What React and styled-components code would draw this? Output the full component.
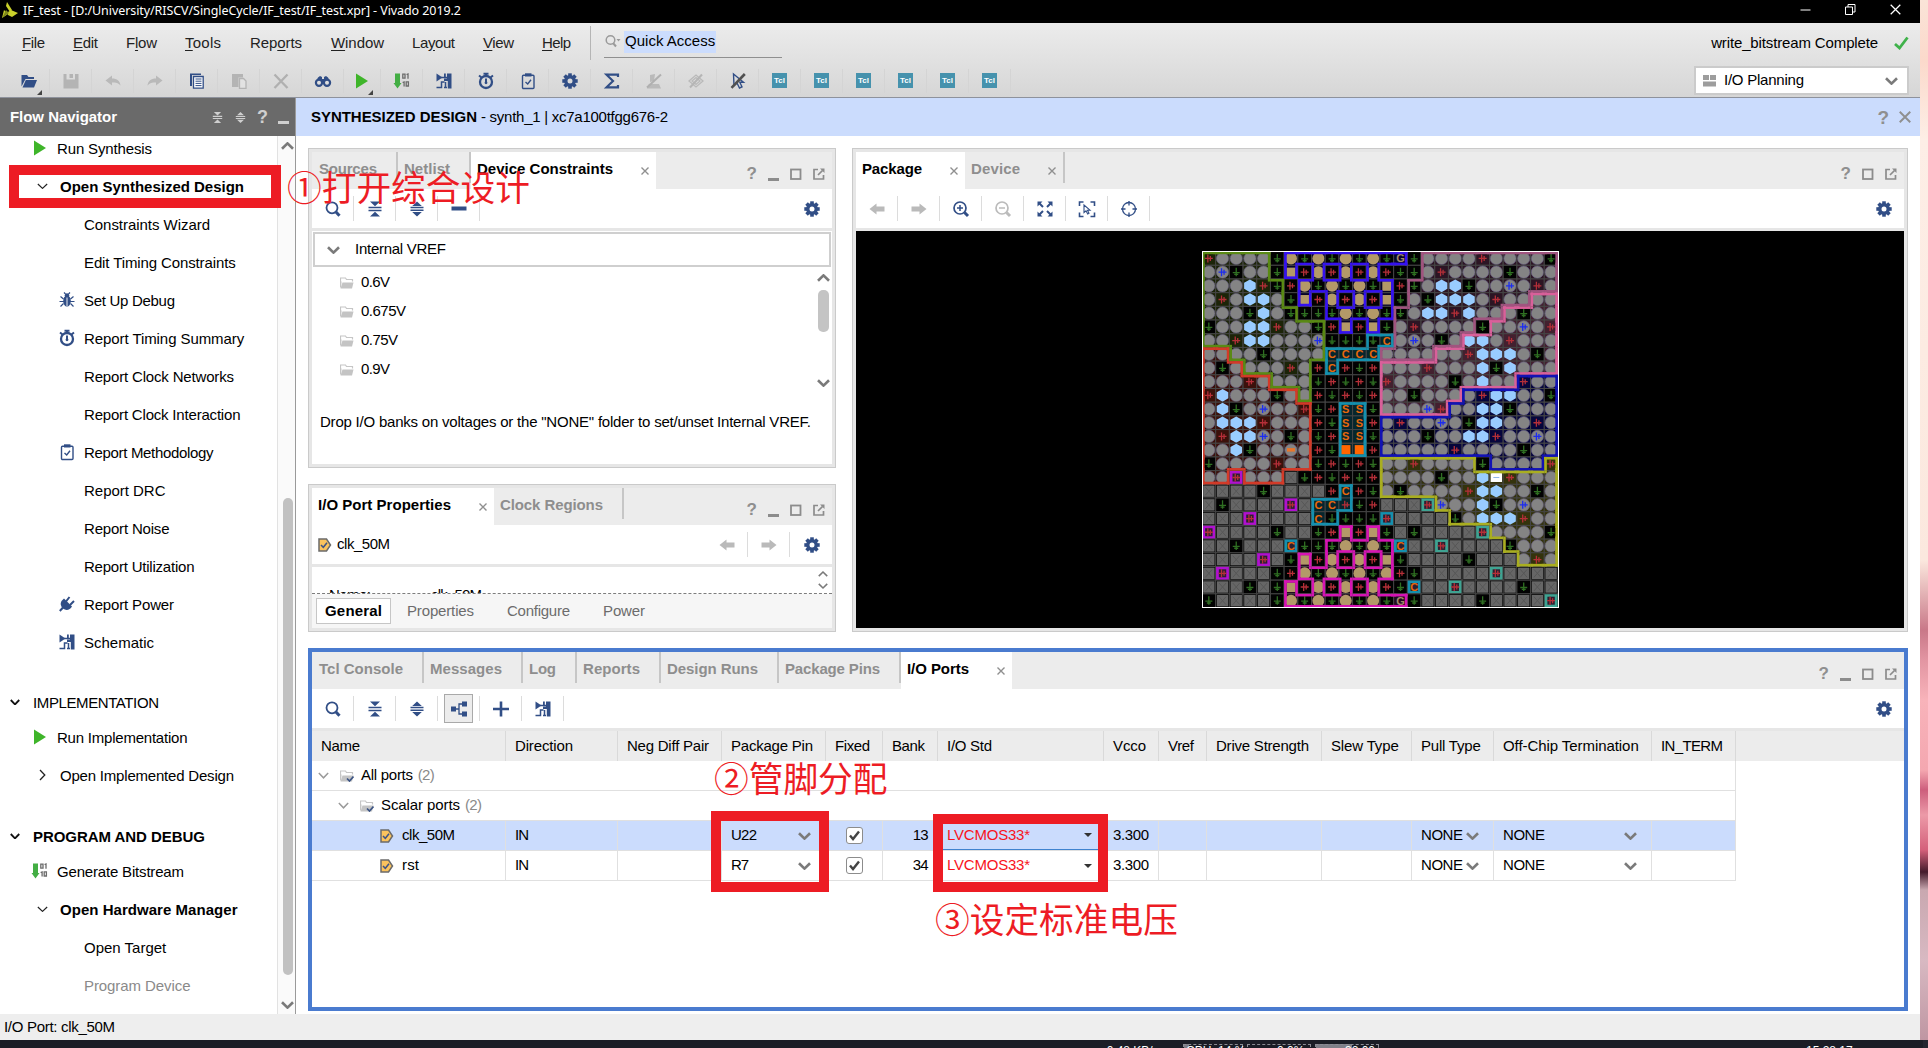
import React from 'react';
import styled, { createGlobalStyle, css } from 'styled-components';

const NAVY = '#314e86';
const GREY = '#8c8c8c';
const RED = '#ed1c24';
const FONT = '"Liberation Sans", Arial, "Noto Sans CJK SC", sans-serif';

const GlobalStyle = createGlobalStyle`
  * { box-sizing: border-box; }
  html, body { margin: 0; padding: 0; }
  body { width: 1928px; height: 1048px; overflow: hidden; background: #fff; font-family: ${FONT}; font-size: 15px; color: #000; }
  svg { display: block; flex: none; }
`;

/* ---------- text with a fixed measure ---------- */
let ctx;
const tracking = (text, width, size, bold, family) => {
  if (!width) return 0;
  ctx = ctx || document.createElement('canvas').getContext('2d');
  ctx.font = `${bold ? 'bold ' : ''}${size}px ${family}`;
  return (width - ctx.measureText(text).width) / Math.max(1, text.length - 1);
};

const Label = styled.span`
  display: block;
  white-space: pre;
  flex: none;
  padding-bottom: 2px;
  font-family: ${(p) => p.$family};
  font-size: ${(p) => p.$size}px;
  font-weight: ${(p) => (p.$bold ? 'bold' : 'normal')};
  color: ${(p) => p.$color};
  letter-spacing: ${(p) => p.$ls}px;
`;
const U = styled.u`text-underline-offset: 2px;`;

function T({ children, w, size = 15, bold = false, color = 'inherit', family = FONT, mark }) {
  const ls = tracking(children, w, size, bold, family);
  const i = mark ? children.indexOf(mark) : -1;
  return (
    <Label $family={family} $size={size} $bold={bold} $color={color} $ls={ls}>
      {i < 0 ? children : <>{children.slice(0, i)}<U>{mark}</U>{children.slice(i + 1)}</>}
    </Label>
  );
}

/* ---------- icons ---------- */
const Svg = ({ s = 18, vb = 18, children }) => (
  <svg width={s} height={s} viewBox={`0 0 ${vb} ${vb}`} fill="none">{children}</svg>
);
const gearTeeth = [0, 45, 90, 135, 180, 225, 270, 315];
const Icons = {
  open: () => <Svg><path d="M1.5 14.5V3H7L8.5 5H14V7H5.500L1.500 14.500Z" fill={NAVY} /><path d="M5.800 8H17L14 15.500H2.500Z" fill={NAVY} /></Svg>,
  save: () => <Svg><path d="M1.500 2H4.500V7.500H13V2H16.500V16.500H1.500Z M7.500 2H11V6H7.500Z" fill="#b4b4b4" /></Svg>,
  undo: () => <Svg><path d="M1.500 8.500L8 3.500V6.500C13 6.500 16 9 16.500 13.500C14.500 11 12 10.500 8 10.500V13.500Z" fill="#b9b9b9" /></Svg>,
  redo: () => <Svg><path d="M16.500 8.500L10 3.500V6.500C5 6.500 2 9 1.500 13.500C3.500 11 6 10.500 10 10.500V13.500Z" fill="#b9b9b9" /></Svg>,
  copy: () => <Svg><path d="M2 1.500H13V3H4V14H2Z" fill={NAVY} /><path d="M5.500 4.500H15.200V16.200H5.500Z" fill="#fff" stroke={NAVY} strokeWidth="1.300" /><path d="M7.500 7H13.500M7.500 9.200H13.500M7.500 11.400H13.500M7.500 13.600H13.500" stroke={NAVY} strokeWidth="1" /></Svg>,
  paste: () => <Svg><path d="M2 2H13V5.500H8.500V15H2Z" fill="#b4b4b4" /><path d="M9.500 6.500H13.500L16 9V16.300H9.500Z" fill="#e2e2e2" stroke="#b4b4b4" strokeWidth="1.300" /></Svg>,
  cut: () => <Svg><path d="M2.500 2.500L15.500 16M15.500 2.500L2.500 16" stroke="#b0b0b0" strokeWidth="2.300" /></Svg>,
  find: () => <Svg><path d="M4 5.500L6 4L8 5V7H10V5L12 4L14 5.500L16 10H2Z" fill={NAVY} /><circle cx="5" cy="10.800" r="3.100" stroke={NAVY} strokeWidth="2.200" fill="#dfdfdf" /><circle cx="13" cy="10.800" r="3.100" stroke={NAVY} strokeWidth="2.200" fill="#dfdfdf" /></Svg>,
  play: () => <Svg><path d="M3 1.500L15 9L3 16.500Z" fill="#3fb52a" /></Svg>,
  bits: () => <Svg><path d="M2 1.500H7V11H8.500L4.500 16.500L.5 11H2Z" fill="#43ae44" /><path d="M9.800 2.200h2.200v4h-2.200zM13.500 2.500l1.500-.5V6.800M9.600 10.500l1.500-.5V14.500M13.200 9.800h2.200v4.200h-2.200z" stroke="#6b6b6b" strokeWidth="1.300" /></Svg>,
  schem: () => <Svg><path d="M1.500 1.500V9.500L7.500 5.500Z" fill={NAVY} /><path d="M6 5.500H12M9.500 10H6.500V15.600H1.500M9 15.600H12M10.500 10V15.500" stroke={NAVY} strokeWidth="1.500" /><path d="M9 1.500H10.800V5H12V1.500H16.500V16.500H12.800V9H9V6.500H12V5H9Z" fill={NAVY} /></Svg>,
  clock: () => <Svg><circle cx="9" cy="10" r="6" stroke={NAVY} strokeWidth="2.300" /><path d="M9 6.500V10.500M9 1V4M6.500 1.800H11.500M2 3.500L4.500 5.500M16 3.500L13.500 5.500" stroke={NAVY} strokeWidth="2" /><circle cx="9" cy="10.800" r="1.400" fill={NAVY} /></Svg>,
  clip: () => <Svg><rect x="3.500" y="3.200" width="11.500" height="13.300" rx="1" stroke={NAVY} strokeWidth="1.400" /><path d="M6 1.300H12.500V4.500H6Z" fill={NAVY} /><path d="M6.500 10L8.700 12L12 7.800" stroke={NAVY} strokeWidth="1.400" /></Svg>,
  gear: () => (
    <Svg>
      {gearTeeth.map((a) => <rect key={a} x="7.200" y="1.300" width="3.600" height="4" fill={NAVY} transform={`rotate(${a} 9 9)`} />)}
      <circle cx="9" cy="9" r="4.200" stroke={NAVY} strokeWidth="3.400" />
    </Svg>
  ),
  sigma: () => <Svg><path d="M15 5V2.700H3.500L10 9L3.500 15.300H15V13" stroke={NAVY} strokeWidth="2.200" /></Svg>,
  noflag: () => <Svg><path d="M2 16.500H16L14 12H4ZM5 3L10 2L9 9L5 10Z" fill="#bababa" /><path d="M2 15.500L16 2.500" stroke="#b0b0b0" strokeWidth="2" /></Svg>,
  nomark: () => <Svg><path d="M2 9L9 3L16 9L9 15Z M5 9L9 5.500L13 9L9 12.500Z" stroke="#b9b9b9" strokeWidth="1.300" /><path d="M3 15.500L15 2.500" stroke="#b5b5b5" strokeWidth="2" /></Svg>,
  nosel: () => <Svg><path d="M4.500 2L5 13.500L8 11L10.500 16L13 14.800L10.800 10.200H14.500Z" stroke={NAVY} strokeWidth="1.400" /><path d="M2.500 15.800L15.800 2" stroke="#505050" strokeWidth="2.600" /></Svg>,
  bug: () => <Svg><ellipse cx="9" cy="10" rx="3.800" ry="5.500" fill={NAVY} /><circle cx="9" cy="4.500" r="2.300" fill={NAVY} /><path d="M6 1.500L7.500 3M12 1.500L10.500 3M2.500 5.500L5.500 8M15.500 5.500L12.500 8M1.500 10.500H16.500M2.500 15.500L5.500 12.500M15.500 15.500L12.500 12.500" stroke={NAVY} strokeWidth="1.200" /><path d="M9 6.500V15" stroke="#fff" strokeWidth=".9" /></Svg>,
  plug: () => <Svg><path d="M3.500 6L6 3.500L14 11.500C12 15 8 16 5 13.500C2.500 11 2 8.500 3.500 6Z" fill={NAVY} /><path d="M8 6.500L11.500 2M12 10L16 6M1.800 16L5 12.500" stroke={NAVY} strokeWidth="2" /></Svg>,
  search: () => <Svg><circle cx="8" cy="7.800" r="5.500" stroke={NAVY} strokeWidth="1.800" /><path d="M12 12L15.500 15.800" stroke={NAVY} strokeWidth="3" /></Svg>,
  collapse: ({ c = NAVY, s }) => <Svg s={s}><path d="M4 1.500H14L9 6.300ZM9 11.700L14 16.500H4Z" fill={c} /><path d="M2.500 7.400H15.500M2.500 10.400H15.500" stroke={c} strokeWidth="1.500" /></Svg>,
  expand: ({ c = NAVY, s }) => <Svg s={s}><path d="M9 1.500L13.800 6H4.200ZM4.200 12H13.800L9 16.500Z" fill={c} /><path d="M2.500 7.500H15.500M2.500 10.300H15.500" stroke={c} strokeWidth="1.500" /></Svg>,
  minus: () => <Svg><path d="M1.500 8.500H16.500" stroke={NAVY} strokeWidth="4" /></Svg>,
  plus: () => <Svg><path d="M1 9H17M9 1.500V16.500" stroke={NAVY} strokeWidth="2.600" /></Svg>,
  tree: () => <Svg><path d="M1 6.500H6V11.500H1ZM12 1.500H17V6.500H12ZM12 11.500H17V16.500H12Z" fill={NAVY} /><path d="M6 9H9M12 4H9V14H12" stroke={NAVY} strokeWidth="1.300" /></Svg>,
  left: () => <Svg><path d="M1.500 9L8.500 3.500V6.500H16.500V11.500H8.500V14.500Z" fill="#bababa" /></Svg>,
  right: () => <Svg><path d="M16.500 9L9.500 3.500V6.500H1.500V11.500H9.500V14.500Z" fill="#bababa" /></Svg>,
  zoomin: () => <Svg><circle cx="8" cy="8" r="6" stroke={NAVY} strokeWidth="1.700" /><path d="M5 8H11M8 5V11" stroke={NAVY} strokeWidth="1.500" /><path d="M12.500 12.500L16 16" stroke={NAVY} strokeWidth="3" /></Svg>,
  zoomout: () => <Svg><circle cx="8" cy="8" r="6" stroke="#bbb" strokeWidth="1.700" /><path d="M5 8H11" stroke="#bbb" strokeWidth="1.500" /><path d="M12.500 12.500L16 16" stroke="#bbb" strokeWidth="3" /></Svg>,
  fit: () => <Svg><path d="M1.500 1.500H6.500L1.500 6.500ZM16.500 1.500V6.500L11.500 1.500ZM1.500 16.500V11.500L6.500 16.500ZM16.500 16.500H11.500L16.500 11.500Z" fill={NAVY} /><path d="M3 3L7 7M15 3L11 7M3 15L7 11M15 15L11 11" stroke={NAVY} strokeWidth="2" /></Svg>,
  fitsel: () => <Svg><path d="M1.500 6V2H5.500M12.500 2H16.500V6M16.500 12.500V16.500H12.500M5.500 16.500H1.500V12.500" stroke={NAVY} strokeWidth="1.600" /><path d="M6 5V12.500L8 10.800L9.700 14L11 13.200L9.500 10.200H12Z" stroke={NAVY} strokeWidth="1.100" /></Svg>,
  target: () => <Svg><circle cx="9" cy="9" r="6.500" stroke={NAVY} strokeWidth="1.300" /><path d="M9 1V5.500M9 12.500V17M1 9H5.500M12.500 9H17" stroke={NAVY} strokeWidth="1.300" /></Svg>,
};

const Chevron = ({ w = 13, h = 8, c = '#7a7a7a', t = 2.6, dir = 'down' }) => (
  <svg width={w} height={h} viewBox="0 0 13 8" preserveAspectRatio="none" fill="none">
    <path d={dir === 'down' ? 'M1 1.200L6.500 6.600L12 1.200' : 'M1 6.800L6.500 1.400L12 6.800'} stroke={c} strokeWidth={t} />
  </svg>
);
const CaretRight = () => <svg width="7" height="12" viewBox="0 0 7 12" fill="none"><path d="M1 1L5.800 6L1 11" stroke="#222" strokeWidth="1.300" /></svg>;
const CloseX = ({ s = 8, c = '#8f8f8f', t = 1.4 }) => <svg width={s} height={s} viewBox="0 0 8 8" fill="none"><path d="M.5 .5L7.500 7.500M7.500 .5L.5 7.500" stroke={c} strokeWidth={t} /></svg>;
const Folder = ({ checked }) => (
  <svg width="14" height="12" viewBox="0 0 14 12" fill="none">
    <path d="M.5 10.500V1H5.500L6.500 2.500H12.500V4.500M.5 10.500L1 4.500" stroke="#c6c6c6" strokeWidth="1.200" />
    <path d="M2.500 5.500H13.500L12 11.500H.5Z" fill="#c4c4c4" />
    {checked && <path d="M7 8.500L9.500 11L13.500 6.500" stroke="#3c5484" strokeWidth="1.700" />}
  </svg>
);
const PortIcon = () => (
  <svg width="14" height="14" viewBox="0 0 14 14" fill="none">
    <path d="M1 1H8.500L12.500 7L8.500 13H1Z" fill="#fbc35d" stroke="#6b6b6b" strokeWidth="1.500" />
    <path d="M3 7L5.300 9.300L9 4.800" stroke="#3f5486" strokeWidth="1.500" />
  </svg>
);

/* ---------- window frame ---------- */
const Desktop = styled.div`
  width: 1928px; height: 1048px; position: relative; overflow: hidden;
  display: grid; grid-template-columns: 1920px 8px; grid-template-rows: 1040px 8px;
`;
const Wallpaper = styled.div`
  background: linear-gradient(#fae4d8 0, #fbd9cb 60px, #fdeee6 140px, #fbe8de 560px, #c97888 630px, #e295a2 660px, #f8b3ba 700px, #f4a7b0 770px, #cd5e7c 790px, #ec9aa8 815px, #d4607a 850px, #451a2b 872px, #c9a8b0 890px, #d8b9c2 960px, #bf96a2 1040px);
`;
const Window = styled.div`display: flex; flex-direction: column; background: #fff; min-width: 0;`;
const TitleBar = styled.div`
  height: 23px; background: #000; color: #fff; display: flex; align-items: center; padding: 0 19px 4px 2px;
`;
const TitleText = styled.div`padding: 4px 0 0 5px; flex: 1; display: flex;`;
const WinButtons = styled.div`display: flex; align-items: center; gap: 34px;`;

const Chrome = styled.div`
  height: 75px; background: linear-gradient(#ececec, #d6d6d6); border-bottom: 1px solid #8e929c;
  display: grid; grid-template-columns: 1fr auto; padding-right: 11px;
`;
const ChromeLeft = styled.div`display: flex; flex-direction: column;`;
const MenuBar = styled.div`height: 40px; display: flex; align-items: center; padding-left: 22px;`;
const MenuItem = styled.div`width: ${(p) => p.$w}px; display: flex; color: #222;`;
const MenuRule = styled.div`width: 1px; height: 34px; background: #b5b5b5; margin: 0 13px 0 0;`;
const QuickAccess = styled.div`
  width: 178px; height: 31px; border-bottom: 1px solid #8f8f8f; display: flex; align-items: flex-start; padding: 4px 0 0 1px; margin-top: -2px;
`;
const QuickIcon = styled.div`width: 19px; padding-top: 3px;`;
const QuickText = styled.div`height: 22px; width: 92px; background: #cbdcfd; display: flex; align-items: center; padding-left: 1px;`;
const MainTools = styled.div`height: 35px; display: flex; align-items: center; padding-left: 8px;`;
const MainTool = styled.div`
  width: ${(p) => p.$w}px; height: 24px; display: flex; align-items: center; justify-content: center; border-right: 1px solid #d4d4d4; position: relative;
`;
const Corner = styled.div`
  position: absolute; right: 7px; bottom: -2px; border: solid transparent; border-width: 0 0 5px 5px; border-bottom-color: #444;
`;
const TclBadge = styled.div`
  width: 15px; height: 15px; background: #4692ad; color: #fff; font-size: 8px; font-weight: bold; display: flex; align-items: center; justify-content: center;
`;
const ChromeRight = styled.div`display: flex; flex-direction: column; align-items: flex-end;`;
const RunStatus = styled.div`height: 40px; display: flex; align-items: center; gap: 16px;`;
const LayoutSelect = styled.div`
  width: 215px; height: 29px; margin-top: 3px; background: #fff; border: 2px solid #cbcbcb; display: flex; align-items: center; padding: 0 9px 0 7px; gap: 8px;
`;
const Spacer = styled.div`flex: 1;`;

const Body = styled.div`height: 916px; display: grid; grid-template-columns: 296px 1fr;`;
const StatusBar = styled.div`height: 26px; background: #eee; padding-left: 4px; display: flex; align-items: center;`;
const Taskbar = styled.div`
  grid-column: 1 / 3; background: #1b1d26; color: #fff; display: flex; align-items: flex-start; overflow: hidden; padding-left: 1094px; border-right: 5px solid #23252f;
`;
const TaskText = styled.div`width: ${(p) => p.$w}px; padding-top: 4px; font-size: 12px; line-height: 14px; white-space: pre;`;
const Meter = styled.div`
  width: ${(p) => p.$w}px; height: 20px; margin: 4px 4px 0 0; border: 1px dashed #8b8b93; border-bottom: 0;
  background: linear-gradient(90deg, #7f7f88 ${(p) => p.$fill}%, transparent ${(p) => p.$fill}%);
  font-size: 12px; line-height: 13px; padding-left: 2px; white-space: pre;
`;

/* ---------- flow navigator ---------- */
const Nav = styled.div`border-right: 1px solid #9a9a9a; display: flex; flex-direction: column;`;
const NavHeader = styled.div`
  height: 38px; background: #6a6a6a; color: #fff; display: flex; align-items: center; padding: 0 6px 0 10px;
`;
const NavButtons = styled.div`display: flex; align-items: center; gap: 10px; color: #cfcfcf; font-weight: bold; font-size: 18px;`;
const LowDash = styled.div`width: ${(p) => p.$w || 11}px; height: 3px; background: ${(p) => p.$c || GREY}; margin-top: 11px;`;
const NavBody = styled.div`height: 878px; display: grid; grid-template-columns: 1fr 18px;`;
const NavList = styled.div`overflow: hidden;`;
const NavRow = styled.div`
  height: 38px; display: grid; align-items: center; margin-top: ${(p) => p.$mt || 0}px;
  grid-template-columns: ${(p) => p.$lead}px ${(p) => p.$icon}px 1fr;
`;
const Cell = styled.div`display: flex; align-items: center;`;
const NavIcon = styled.div`display: flex; align-items: center; padding-bottom: 2px;`;
const ScrollTrack = styled.div`
  background: #fafafa; border-left: 1px solid #e2e2e2; display: flex; flex-direction: column; align-items: center; padding: 6px 0 5px 2px;
`;
const NavThumb = styled.div`width: 10px; height: 477px; margin-top: 348px; margin-bottom: auto; border-radius: 5px; background: #c1c1c1;`;

const NAV = [
  { k: 'run', t: 'Run Synthesis', w: 95, icon: 'play', mt: -6 },
  { k: 'open', t: 'Open Synthesized Design', w: 184, bold: true },
  { k: 'sub', t: 'Constraints Wizard', w: 126 },
  { k: 'sub', t: 'Edit Timing Constraints', w: 152 },
  { k: 'sub', t: 'Set Up Debug', w: 91, icon: 'bug' },
  { k: 'sub', t: 'Report Timing Summary', w: 160.500, icon: 'clock' },
  { k: 'sub', t: 'Report Clock Networks', w: 150 },
  { k: 'sub', t: 'Report Clock Interaction', w: 156.500 },
  { k: 'sub', t: 'Report Methodology', w: 129.500, icon: 'clip' },
  { k: 'sub', t: 'Report DRC', w: 81.500 },
  { k: 'sub', t: 'Report Noise', w: 85.500 },
  { k: 'sub', t: 'Report Utilization', w: 110.500 },
  { k: 'sub', t: 'Report Power', w: 90, icon: 'plug' },
  { k: 'sub', t: 'Schematic', w: 70, icon: 'schem' },
  { k: 'sec', t: 'IMPLEMENTATION', w: 126, mt: 22 },
  { k: 'run', t: 'Run Implementation', w: 130.500, icon: 'play', mt: -3 },
  { k: 'closed', t: 'Open Implemented Design', w: 174 },
  { k: 'sec', t: 'PROGRAM AND DEBUG', w: 172.500, bold: true, mt: 23 },
  { k: 'run', t: 'Generate Bitstream', w: 127, icon: 'bits', mt: -3 },
  { k: 'open', t: 'Open Hardware Manager', w: 177.500, bold: true },
  { k: 'sub', t: 'Open Target', w: 82.500 },
  { k: 'sub', t: 'Program Device', w: 106.500, color: '#8a8a8a' },
];
const navCols = { run: [31, 26], open: [37, 23], closed: [39, 21], sub: [58, 26], sec: [10, 23] };

function FlowNavigator() {
  return (
    <Nav>
      <NavHeader>
        <T w={107} bold>Flow Navigator</T>
        <Spacer />
        <NavButtons>
          <Icons.collapse c="#cfcfcf" s={13} /><Icons.expand c="#cfcfcf" s={13} /><span>?</span><LowDash $c="#cfcfcf" />
        </NavButtons>
      </NavHeader>
      <NavBody>
        <NavList>
          {NAV.map((n) => {
            const Icon = n.icon && Icons[n.icon];
            const [lead, icon] = navCols[n.k];
            return (
              <NavRow key={n.t} $lead={lead} $icon={icon} $mt={n.mt}>
                <span />
                <NavIcon>
                  {Icon && <Icon />}
                  {n.k === 'open' && <Chevron w={11} h={6.500} c="#222" t={1.400} />}
                  {n.k === 'closed' && <CaretRight />}
                  {n.k === 'sec' && <Chevron w={10} h={6.500} c="#111" t={2.400} />}
                </NavIcon>
                <Cell><T w={n.w} bold={n.bold} color={n.color}>{n.t}</T></Cell>
              </NavRow>
            );
          })}
        </NavList>
        <ScrollTrack><Chevron dir="up" /><NavThumb /><Chevron /></ScrollTrack>
      </NavBody>
    </Nav>
  );
}

/* ---------- panels ---------- */
const Main = styled.div`display: flex; flex-direction: column; min-width: 0;`;
const DesignHeader = styled.div`
  height: 38px; background: #cbdcfd; display: flex; align-items: center; padding: 0 9px 0 15px;
`;
const HelpMark = styled.span`font-size: ${(p) => p.$s || 17}px; font-weight: bold; color: #8f8f8f; line-height: 1;`;
const Workspace = styled.div`
  height: 878px; padding: 12px 12px 3px; display: grid; grid-template-rows: 484px 363px; row-gap: 16px;
`;
const Upper = styled.div`display: grid; grid-template-columns: 528px 1056px; column-gap: 16px;`;
const LeftStack = styled.div`display: grid; grid-template-rows: 320px 148px; row-gap: 16px;`;
const Panel = styled.div`
  display: flex; flex-direction: column; min-height: 0; overflow: hidden; background: #fff;
  ${(p) => p.$active
    ? css`border: 4px solid #4a7bcf;`
    : css`border: 1px solid #cacaca; box-shadow: inset 0 0 0 3px #e6e6e6; padding: 3px;`}
`;
const TabStrip = styled.div`height: 37px; flex: none; background: #ececec; display: flex;`;
const Tab = styled.div`
  width: ${(p) => p.$w}px; height: ${(p) => (p.$on ? 37 : 31)}px; padding: 0 7px 0 ${(p) => p.$pl || 6}px; display: flex; align-items: center; justify-content: space-between;
  background: ${(p) => (p.$on ? '#fff' : 'transparent')};
  border-right: ${(p) => (p.$rule ? '2px solid #c6c6c6' : '0')};
  & > :first-child { margin-top: ${(p) => (p.$on ? -3 : 3)}px; }
  & > svg { margin-top: ${(p) => (p.$on ? 1 : 7)}px; }
`;
const PanelButtons = styled.div`display: flex; align-items: center; gap: 11px; margin-left: auto; padding: 6px 7px 0 0;`;
const Tools = styled.div`
  height: 42px; flex: none; border-bottom: 3px solid #e6e6e6; display: flex; align-items: center; padding-right: 11px;
`;
const Tool = styled.div`
  width: 42px; height: 25px; border-right: 1px solid #dcdcdc; display: flex; align-items: center; justify-content: center;
`;
const Pressed = styled.div`
  width: 29px; height: 29px; background: #ececec; border: 1px solid #a9a9a9; display: flex; align-items: center; justify-content: center; flex: none;
`;

function Buttons({ min = true }) {
  return (
    <PanelButtons>
      <HelpMark>?</HelpMark>
      {min && <LowDash />}
      <svg width="12" height="12" viewBox="0 0 12 12" fill="none"><rect x="1" y="1.500" width="9.500" height="9.500" stroke={GREY} strokeWidth="1.800" /></svg>
      <svg width="12" height="12" viewBox="0 0 12 12" fill="none"><path d="M5 1.500H1V11H10.500V7M5 7L9.500 2.500" stroke={GREY} strokeWidth="1.700" /><path d="M7 .5H11.500V5Z" fill={GREY} /></svg>
    </PanelButtons>
  );
}
function Tabs({ tabs, min }) {
  return (
    <TabStrip>
      {tabs.map((t) => (
        <Tab key={t.t} $w={t.w} $on={t.on} $rule={t.rule} $pl={t.pl}>
          <T w={t.tw} bold color={t.on ? '#000' : '#8e8e8e'}>{t.t}</T>
          {t.x && <CloseX />}
        </Tab>
      ))}
      <Buttons min={min} />
    </TabStrip>
  );
}
function ToolRow({ items }) {
  return (
    <Tools>
      {items.map((n) => {
        const Icon = Icons[n];
        return <Tool key={n}>{n === 'tree' ? <Pressed><Icon /></Pressed> : <Icon />}</Tool>;
      })}
      <Spacer />
      <Icons.gear />
    </Tools>
  );
}

/* device constraints */
const VrefHead = styled.div`
  height: 35px; margin: 1px 1px 0; border: 2px solid #cfcfcf; display: flex; align-items: center; padding: 0 0 0 12px; gap: 15px;
`;
const VrefBody = styled.div`height: 124px; display: grid; grid-template-columns: 1fr 16px;`;
const VrefList = styled.div`padding: 1px 0 0 28px;`;
const VrefRow = styled.div`height: 29px; display: flex; align-items: center; gap: 7px;`;
const VrefScroll = styled.div`display: flex; flex-direction: column; align-items: center; padding: 7px 2px 4px 0;`;
const VrefThumb = styled.div`width: 11px; height: 42px; margin: 8px 0 auto; border-radius: 5px; background: #c4c4c4;`;
const Hint = styled.div`height: 62px; padding: 0 0 0 8px; display: flex; align-items: center;`;

/* port properties */
const PortHead = styled.div`
  height: 42px; flex: none; border-bottom: 3px solid #e6e6e6; display: flex; align-items: center; padding: 0 11px 0 6px;
`;
const PortBody = styled.div`
  height: 27px; flex: none; border-bottom: 1px dashed #7d7d7d; display: flex; overflow: hidden; padding: 19px 4px 0 17px;
`;
const PropName = styled.div`width: 102px; height: 17px; display: flex; line-height: 17px;`;
const MiniScroll = styled.div`display: flex; flex-direction: column; gap: 6px; margin: -15px 0 0 auto;`;
const SubTabs = styled.div`height: 34px; background: #f6f6f6; display: flex; align-items: center; padding-left: 4px;`;
const SubTab = styled.div`
  height: 26px; width: ${(p) => p.$w}px; display: flex; align-items: center; padding-left: 7px; color: #6c6c6c;
  ${(p) => p.$on && css`background: #fff; border: 1px solid #c6c6c6; color: #000; padding-left: 8px; margin-right: 9px;`}
`;

/* ---------- package view ---------- */
const PackageCanvas = styled.div`flex: 1; background: #000; display: flex; align-items: center; justify-content: center;`;

const PINS = [
  'roooovtvtvtvt' + 'vGvooooroooov',
  'obvoovTrtrtrt' + 'rvvoroooovooo',
  'ooohrvrtvtvtv' + 'Trvohhvooboro',
  'orohhovTrtrtr' + 'Tvovhhhoroooo',
  'ooovhovvvvtvt' + 'vvohhrhooovoo',
  'voohhroovrTrT' + 'voroooovoobor',
  'oorhhooobvvvv' + 'Cobovohhorooo',
  'oooovooooCCCC' + 'oooooorhhhovo',
  'ovoooororCrvr' + 'ooorooohvhooo',
  'oooroooovrvrv' + 'roooovohooroo',
  'rhooovoorvrvr' + 'oovoooorhhoov',
  'ohvoboorvrSSv' + 'ooobroohhvooo',
  'ohhhrooorvSSr' + 'oroobovhhooro',
  'orhhbovovrSSv' + 'ooovoohhroobo',
  'oohvooOorvqqr' + 'oooooroooovoo',
  'vooooroovrvrv' + 'ooroooovoooor',
  'ooMoooxvrvrvr' + 'oooovoohWrooo',
  'xxxxvxxxxrCrv' + 'ovoooorhhoovo',
  'xvxxxxMxCCrvr' + 'xxxNboohvoboo',
  'xxxMxxxxCvvvv' + 'Kxxxxvohhhroo',
  'MxxxxvxxvrTrT' + 'vxvxxxxNoooov',
  'xxvxxxDvvvtvt' + 'vDxxNxxxxvooo',
  'xxxxMxvTrtrtr' + 'Tvxxxxvxxxoro',
  'xMxxxvrtvtvtv' + 'trvxxxxxNxxxx',
  'xxxvxvTrtrtrt' + 'rvDxxNxxxxvxx',
  'vxxxxvtvtvtvt' + 'vGvxxxxvxxxxN',
];
const GRID = PINS.map((l) => l.split(''));

const REGIONS = {
  A: ['#5a8a14', '#1c2408'], R: ['#d33a28', '#3b110b'], I: ['#3512f0', '#08052a'], V: ['#a0547f', '#2c1524'],
  P: ['#d9609a', '#43202f'], B: ['#1212b4', '#06063c'], Y: ['#a9ae20', '#34330c'], T: ['#1590ae', '#06262d'], M: ['#d614b4', '#230a20'],
};
const OWNERS = Array.from({ length: 26 }, () => Array(26).fill(''));
const own = (k, rows) => Object.entries(rows).forEach(([r, spans]) => spans.forEach(([a, b = a]) => {
  for (let c = a; c <= b; c += 1) OWNERS[r][c] = k;
}));
own('A', { 0: [[0, 4]], 1: [[0, 4]], 2: [[0, 5]], 3: [[0, 5]], 4: [[0, 6]], 5: [[0, 8]], 6: [[0, 8]], 7: [[2, 8]], 8: [[3, 7]], 9: [[5, 7]], 10: [[7]] });
own('R', { 7: [[0, 1]], 8: [[0, 2]], 9: [[0, 4]], 10: [[0, 6]], 11: [[0, 7]], 12: [[0, 7]], 13: [[0, 7]], 14: [[0, 7]], 15: [[0, 7]], 16: [[0, 1], [3, 5]] });
own('I', { 0: [[6, 14]], 1: [[6], [8], [10], [12]], 2: [[7, 13]], 3: [[7], [9], [11], [13]], 4: [[9, 13]], 5: [[10], [12]] });
own('V', { 0: [[16, 25]], 1: [[16, 25]], 2: [[15, 25]], 3: [[15, 23]], 4: [[14, 21]], 5: [[14, 19]], 6: [[14, 18]], 7: [[13, 16]] });
own('P', { 3: [[24, 25]], 4: [[22, 25]], 5: [[21, 25]], 6: [[19, 25]], 7: [[17, 25]], 8: [[13, 25]], 9: [[13, 22]], 10: [[13, 18]], 11: [[13, 17]] });
own('B', { 9: [[23, 25]], 10: [[19, 25]], 11: [[18, 25]], 12: [[13, 25]], 13: [[13, 25]], 14: [[13, 25]], 15: [[21, 24]] });
own('Y', { 15: [[13, 19], [25]], 16: [[13, 25]], 17: [[13, 25]], 18: [[17, 25]], 19: [[18, 25]], 20: [[21, 25]], 21: [[22, 25]], 22: [[23, 25]] });
own('T', { 6: [[12, 13]], 7: [[9, 12]], 8: [[9]], 11: [[10, 11]], 12: [[10, 11]], 13: [[10, 11]], 14: [[10, 11]], 17: [[10]], 18: [[8, 10]], 19: [[8, 9]] });
own('M', { 20: [[10], [12]], 21: [[9, 13]], 22: [[7], [9], [11], [13]], 23: [[7, 13]], 24: [[6], [8], [10], [12]], 25: [[6, 14]] });

const P = 13.69;
const owner = (r, c) => (r < 0 || c < 0 || r > 25 || c > 25 ? '' : OWNERS[r][c]);

const Diode = ({ c }) => <path d="M-4 0H4M-1 -4V4M1.500 -2.500V2.500" stroke={c} strokeWidth="1.300" />;
function Pin({ k, r, c }) {
  const region = REGIONS[OWNERS[r][c]];
  const bg = k === 'v' || !region ? '#020202' : region[1];
  const box = { M: '#b011cf', N: '#3fa392', K: '#1590ae', D: '#1590ae' }[k];
  return (
    <g transform={`translate(${(c + 0.5) * P} ${(r + 0.5) * P + 0.6})`} fill="none">
      <rect x="-6.845" y="-6.845" width={P} height={P} fill={bg} stroke="#464646" strokeWidth="1" />
      {box && <rect x="-6.500" y="-6.500" width="13" height="13" fill={box} />}
      {box && <rect x="-3.700" y="-4" width="7.400" height="8" fill="#2c2030" />}
      {'obO'.includes(k) && <circle r="6.100" fill="#848484" stroke="#6a6384" strokeWidth=".7" />}
      {k === 'b' && <Diode c="#1c2cf0" />}
      {'rMNK'.includes(k) && <Diode c="#b52f38" />}
      {k === 'v' && <path d="M0 -4.500V4M-3.500 .5H3.500M-2 2.300H2" stroke="#2f6f22" strokeWidth="1.300" />}
      {k === 'h' && <path d="M-5.800 -3L0 -6.300L5.800 -3V3L0 6.300L-5.800 3Z" fill="#99ccff" />}
      {k === 't' && <circle r="6" fill="#b39968" />}
      {k === 'T' && <rect x="-4.500" y="-4.500" width="9" height="9.500" fill="#b39968" />}
      {k === 'x' && <><rect x="-5.700" y="-5.700" width="11.400" height="11.400" fill="#666" /><path d="M-3.500 -4L3.500 4M3.500 -4L-3.500 4" stroke="#575757" strokeWidth="1" /></>}
      {k === 'q' && <rect x="-4.700" y="-5" width="9.400" height="9.500" fill="#ff6600" />}
      {k === 'O' && <rect x="-4" y="-2" width="8" height="3.500" fill="#e8762c" />}
      {k === 'W' && <><rect x="-5.700" y="-4.500" width="11.400" height="9" fill="#fff" /><path d="M-3 0H3" stroke="#8fb6e8" /></>}
      {'CSGD'.includes(k) && (
        <text y="4" textAnchor="middle" fontFamily={FONT} fontWeight="bold" fontSize="11" fill={k === 'G' ? '#a58c6c' : '#e8690c'}>{k === 'D' ? 'C' : k}</text>
      )}
    </g>
  );
}
function Edges({ r, c }) {
  const o = owner(r, c);
  if (!o) return null;
  const t = 2.6;
  const x = c * P;
  const y = r * P + 0.6;
  const n = (dr, dc) => owner(r + dr, c + dc) !== o;
  const out = [];
  if (n(-1, 0)) out.push([x, y, P, t]);
  if (n(1, 0)) out.push([x, y + P - t, P, t]);
  if (n(0, -1)) out.push([x, y, t, P]);
  if (n(0, 1)) out.push([x + P - t, y, t, P]);
  if (n(-1, -1)) out.push([x, y, t, t]);
  if (n(-1, 1)) out.push([x + P - t, y, t, t]);
  if (n(1, -1)) out.push([x, y + P - t, t, t]);
  if (n(1, 1)) out.push([x + P - t, y + P - t, t, t]);
  return out.map((b, i) => <rect key={i} x={b[0]} y={b[1]} width={b[2]} height={b[3]} fill={REGIONS[o][0]} />);
}
function PackageMap() {
  return (
    <svg width="357" height="357" viewBox="0 0 357 357">
      {GRID.map((row, r) => row.map((k, c) => <Pin key={`${r}-${c}`} k={k} r={r} c={c} />))}
      {GRID.map((row, r) => row.map((k, c) => <Edges key={`${r}-${c}`} r={r} c={c} />))}
      <rect x=".5" y=".5" width="356" height="356" fill="none" stroke="#fff" />
    </svg>
  );
}

/* ---------- ports table ---------- */
const COLS = [
  ['Name', 194, 39], ['Direction', 112, 58], ['Neg Diff Pair', 104, 82], ['Package Pin', 104, 82], ['Fixed', 57, 35], ['Bank', 55, 33],
  ['I/O Std', 166, 45], ['Vcco', 55, 33], ['Vref', 48, 26], ['Drive Strength', 115, 93], ['Slew Type', 90, 68], ['Pull Type', 82, 60],
  ['Off-Chip Termination', 158, 136], ['IN_TERM', 84, 62],
];
const TEMPLATE = COLS.map((c) => `${c[1]}px`).join(' ');
const HeadRow = styled.div`height: 30px; background: #ececec; display: grid; grid-template-columns: ${TEMPLATE};`;
const HeadCell = styled.div`border-right: 1px solid #d9d9d9; padding-left: 9px; display: flex; align-items: center;`;
const GroupRow = styled.div`
  height: 30px; width: 1424px; border: solid #e0e0e0; border-width: 0 1px 1px 0; display: flex; align-items: center; padding-left: ${(p) => p.$pl}px;
`;
const Gap = styled.div`width: ${(p) => p.$w}px; flex: none;`;
const PortRow = styled.div`
  height: 30px; width: 1424px; display: grid; grid-template-columns: ${TEMPLATE}; border-bottom: 1px solid #e0e0e0;
  background: ${(p) => (p.$sel ? '#cbdcfd' : '#fff')};
`;
const PortCell = styled.div`
  border-right: 1px solid #e0e0e0; padding: 0 ${(p) => p.$pr || 0}px 0 ${(p) => p.$pl || 9}px; display: flex; align-items: center;
  justify-content: ${(p) => p.$j || 'flex-start'};
  ${(p) => p.$line && css`border-bottom: 1px solid #3f83cf;`}
`;
const Check = styled.div`
  width: 17px; height: 17px; margin-bottom: 1px; border: 1.500px solid #8c8c8c; border-radius: 3px; background: #fff; display: flex; align-items: center; justify-content: center;
`;
const Caret = styled.div`border: solid transparent; border-width: 4px 4px 0; border-top-color: #333;`;

function Port({ name, nw, pin, pw, bank, sel }) {
  return (
    <PortRow $sel={sel}>
      <PortCell $pl={68}><PortIcon /><Gap $w={8} /><T w={nw}>{name}</T></PortCell>
      <PortCell><T w={14}>IN</T></PortCell>
      <PortCell />
      <PortCell $j="space-between" $pr={14}><T w={pw}>{pin}</T><Chevron /></PortCell>
      <PortCell $pl={1} $j="center"><Check><svg width="13" height="13" viewBox="0 0 13 13" fill="none"><path d="M2 6.500L5 10L11 2.500" stroke="#444" strokeWidth="2.400" /></svg></Check></PortCell>
      <PortCell $j="flex-end" $pr={9}><T w={16}>{bank}</T></PortCell>
      <PortCell $j="space-between" $pr={11} $line={sel}><T w={83} color="#f8141c">LVCMOS33*</T><Caret /></PortCell>
      <PortCell><T w={36}>3.300</T></PortCell>
      <PortCell /><PortCell /><PortCell />
      <PortCell $j="space-between" $pr={14}><T w={42}>NONE</T><Chevron /></PortCell>
      <PortCell $j="space-between" $pr={14}><T w={42}>NONE</T><Chevron /></PortCell>
      <PortCell />
    </PortRow>
  );
}

/* ---------- annotations ---------- */
const MarkBox = styled.div`
  position: absolute; left: ${(p) => p.$x}px; top: ${(p) => p.$y}px; width: ${(p) => p.$w}px; height: ${(p) => p.$h}px; border: 10px solid ${RED};
`;
const MarkText = styled.div`
  position: absolute; left: ${(p) => p.$x}px; top: ${(p) => p.$y}px; font-family: "Noto Sans CJK SC", sans-serif; font-size: 34.700px; line-height: 40px; color: ${RED}; white-space: nowrap;
`;

const MENU = [
  ['File', 'F', 51, 23], ['Edit', 'E', 53, 25], ['Flow', 'l', 59, 31], ['Tools', 'T', 65, 36], ['Reports', 'o', 81, 52], ['Window', 'W', 81, 53],
  ['Layout', 'y', 71, 43], ['View', 'V', 59, 31], ['Help', 'H', 48, 29],
];
const TOOLBAR = ['open', 'save', 'undo', 'redo', 'copy', 'paste', 'cut', 'find', 'play', 'bits', 'schem', 'clock', 'clip', 'gear', 'sigma', 'noflag', 'nomark', 'nosel',
  'tcl', 'tcl', 'tcl', 'tcl', 'tcl', 'tcl'];

export default function App() {
  return (
    <Desktop>
      <GlobalStyle />
      <Window>
        <TitleBar>
          <svg width="16" height="16" viewBox="0 0 16 16"><path d="M5 0L10 8L8 10L4 4ZM0 16L2 8L6 12ZM6 10L9 8L16 11L10 15L6 13Z" fill="#c9d02a" /><path d="M0 16L4 8L7 11Z" fill="#80891c" /></svg>
          <TitleText><T w={438} size={12.500} family={'"Noto Sans", sans-serif'}>IF_test - [D:/University/RISCV/SingleCycle/IF_test/IF_test.xpr] - Vivado 2019.2</T></TitleText>
          <WinButtons>
            <svg width="11" height="11" viewBox="0 0 11 11"><path d="M.5 6H10.500" stroke="#fff" /></svg>
            <svg width="11" height="11" viewBox="0 0 11 11" fill="none"><path d="M.5 3H7.500V10.500H.5ZM3 3V.5H10V8H7.500" stroke="#fff" /></svg>
            <CloseX s={11} c="#fff" t={0.900} />
          </WinButtons>
        </TitleBar>
        <Chrome>
          <ChromeLeft>
            <MenuBar>
              {MENU.map(([t, m, w, tw]) => <MenuItem key={t} $w={w}><T w={tw} mark={m}>{t}</T></MenuItem>)}
              <MenuRule />
              <QuickAccess>
                <QuickIcon>
                  <svg width="16" height="14" viewBox="0 0 16 14" fill="none"><circle cx="5.500" cy="6" r="4.300" stroke="#9a9a9a" strokeWidth="1.500" /><path d="M8 9L11 12.500" stroke="#9a9a9a" strokeWidth="2" /><path d="M11.500 5H15.500L13.500 7.500Z" fill="#9a9a9a" /></svg>
                </QuickIcon>
                <QuickText><T w={91}>Quick Access</T></QuickText>
              </QuickAccess>
            </MenuBar>
            <MainTools>
              {TOOLBAR.map((n, i) => {
                const Icon = Icons[n];
                return (
                  <MainTool key={`${n}${i}`} $w={n === 'play' ? 37 : 42}>
                    {n === 'tcl' ? <TclBadge>Tcl</TclBadge> : <Icon />}
                    {(n === 'open' || n === 'play') && <Corner />}
                  </MainTool>
                );
              })}
            </MainTools>
          </ChromeLeft>
          <ChromeRight>
            <RunStatus>
              <T w={167}>write_bitstream Complete</T>
              <svg width="15" height="14" viewBox="0 0 15 14" fill="none"><path d="M1 8L5.500 12L13.500 1.500" stroke="#3fb24a" strokeWidth="2.800" /></svg>
            </RunStatus>
            <LayoutSelect>
              <svg width="13" height="12" viewBox="0 0 13 12" fill="#9d9d9d"><path d="M0 0H6V5H0ZM7 0H13V5H7ZM0 6.500H13V11.500H0Z" /></svg>
              <T w={80}>I/O Planning</T>
              <Spacer />
              <Chevron />
            </LayoutSelect>
          </ChromeRight>
        </Chrome>
        <Body>
          <FlowNavigator />
          <Main>
            <DesignHeader>
              <T w={166} bold>SYNTHESIZED DESIGN</T>
              <Gap $w={4} />
              <T w={187}>- synth_1 | xc7a100tfgg676-2</T>
              <Spacer />
              <HelpMark $s={19}>?</HelpMark><Gap $w={10} /><CloseX s={12} t={1.300} />
            </DesignHeader>
            <Workspace>
              <Upper>
                <LeftStack>
                  <Panel>
                    <Tabs tabs={[
                      { t: 'Sources', w: 86, tw: 58, pl: 7, rule: true },
                      { t: 'Netlist', w: 73, tw: 46, rule: true },
                      { t: 'Device Constraints', w: 185, tw: 136, on: true, x: true },
                    ]} />
                    <ToolRow items={['search', 'collapse', 'expand', 'minus']} />
                    <VrefHead><Chevron /><T w={91}>Internal VREF</T></VrefHead>
                    <VrefBody>
                      <VrefList>
                        {[['0.6V', 29], ['0.675V', 45], ['0.75V', 37], ['0.9V', 29]].map(([v, w]) => <VrefRow key={v}><Folder /><T w={w}>{v}</T></VrefRow>)}
                      </VrefList>
                      <VrefScroll><Chevron dir="up" /><VrefThumb /><Chevron /></VrefScroll>
                    </VrefBody>
                    <Hint><T w={491}>{'Drop I/O banks on voltages or the "NONE" folder to set/unset Internal VREF.'}</T></Hint>
                  </Panel>
                  <Panel>
                    <Tabs tabs={[
                      { t: 'I/O Port Properties', w: 182, tw: 133, on: true, x: true },
                      { t: 'Clock Regions', w: 130, tw: 103, rule: true },
                    ]} />
                    <PortHead>
                      <PortIcon /><Gap $w={5} /><T w={53}>clk_50M</T>
                      <Spacer />
                      <Tool><Icons.left /></Tool><Tool><Icons.right /></Tool><Gap $w={13} /><Icons.gear />
                    </PortHead>
                    <PortBody>
                      <PropName><T w={42}>Name:</T></PropName>
                      <PropName><T w={51}>clk_50M</T></PropName>
                      <MiniScroll><Chevron w={10} h={6} t={2} dir="up" /><Chevron w={10} h={6} t={2} /></MiniScroll>
                    </PortBody>
                    <SubTabs>
                      <SubTab $w={75} $on><T w={57} bold>General</T></SubTab>
                      <SubTab $w={100}><T w={67}>Properties</T></SubTab>
                      <SubTab $w={96}><T w={63}>Configure</T></SubTab>
                      <SubTab $w={60}><T w={42}>Power</T></SubTab>
                    </SubTabs>
                  </Panel>
                </LeftStack>
                <Panel>
                  <Tabs min={false} tabs={[
                    { t: 'Package', w: 109, tw: 60, on: true, x: true },
                    { t: 'Device', w: 100, tw: 49, x: true, rule: true },
                  ]} />
                  <ToolRow items={['left', 'right', 'zoomin', 'zoomout', 'fit', 'fitsel', 'target']} />
                  <PackageCanvas><PackageMap /></PackageCanvas>
                </Panel>
              </Upper>
              <Panel $active>
                <Tabs tabs={[
                  { t: 'Tcl Console', w: 112, tw: 84, pl: 7, rule: true },
                  { t: 'Messages', w: 99, tw: 72, rule: true },
                  { t: 'Log', w: 54, tw: 27, rule: true },
                  { t: 'Reports', w: 84, tw: 57, rule: true },
                  { t: 'Design Runs', w: 118, tw: 91, rule: true },
                  { t: 'Package Pins', w: 122, tw: 95, rule: true },
                  { t: 'I/O Ports', w: 111, tw: 62, on: true, x: true },
                ]} />
                <ToolRow items={['search', 'collapse', 'expand', 'tree', 'plus', 'schem']} />
                <HeadRow>{COLS.map(([t, , w]) => <HeadCell key={t}><T w={w}>{t}</T></HeadCell>)}</HeadRow>
                <GroupRow $pl={6}><Chevron w={11} h={7} c="#9a9a9a" t={1.800} /><Gap $w={11} /><Folder checked /><Gap $w={7} /><T w={52}>All ports</T><Gap $w={5} /><T w={17} color="#8a8a8a">(2)</T></GroupRow>
                <GroupRow $pl={26}><Chevron w={11} h={7} c="#9a9a9a" t={1.800} /><Gap $w={11} /><Folder checked /><Gap $w={7} /><T w={79}>Scalar ports</T><Gap $w={5} /><T w={17} color="#8a8a8a">(2)</T></GroupRow>
                <Port name="clk_50M" nw={53} pin="U22" pw={26} bank="13" sel />
                <Port name="rst" nw={17} pin="R7" pw={18} bank="34" />
              </Panel>
            </Workspace>
          </Main>
        </Body>
        <StatusBar><T w={111}>I/O Port: clk_50M</T></StatusBar>
      </Window>
      <Wallpaper />
      <Taskbar>
        <TaskText $w={89}>↑: 0.48 KB/s</TaskText>
        <Meter $w={60} $fill={9}>CPU: 14 %</Meter>
        <Meter $w={64} $fill={0}>▭ ↓: 0.0%</Meter>
        <Meter $w={64} $fill={58}>▭ ↓: 32.00</Meter>
        <Gap $w={423} />
        <TaskText $w={60}>15:28:17</TaskText>
      </Taskbar>
      <MarkBox $x={9} $y={165} $w={272} $h={43} />
      <MarkBox $x={711} $y={811} $w={118} $h={81} />
      <MarkBox $x={933} $y={814} $w={175} $h={78} />
      <MarkText $x={287} $y={166}>①打开综合设计</MarkText>
      <MarkText $x={714} $y={757}>②管脚分配</MarkText>
      <MarkText $x={935} $y={898}>③设定标准电压</MarkText>
    </Desktop>
  );
}
